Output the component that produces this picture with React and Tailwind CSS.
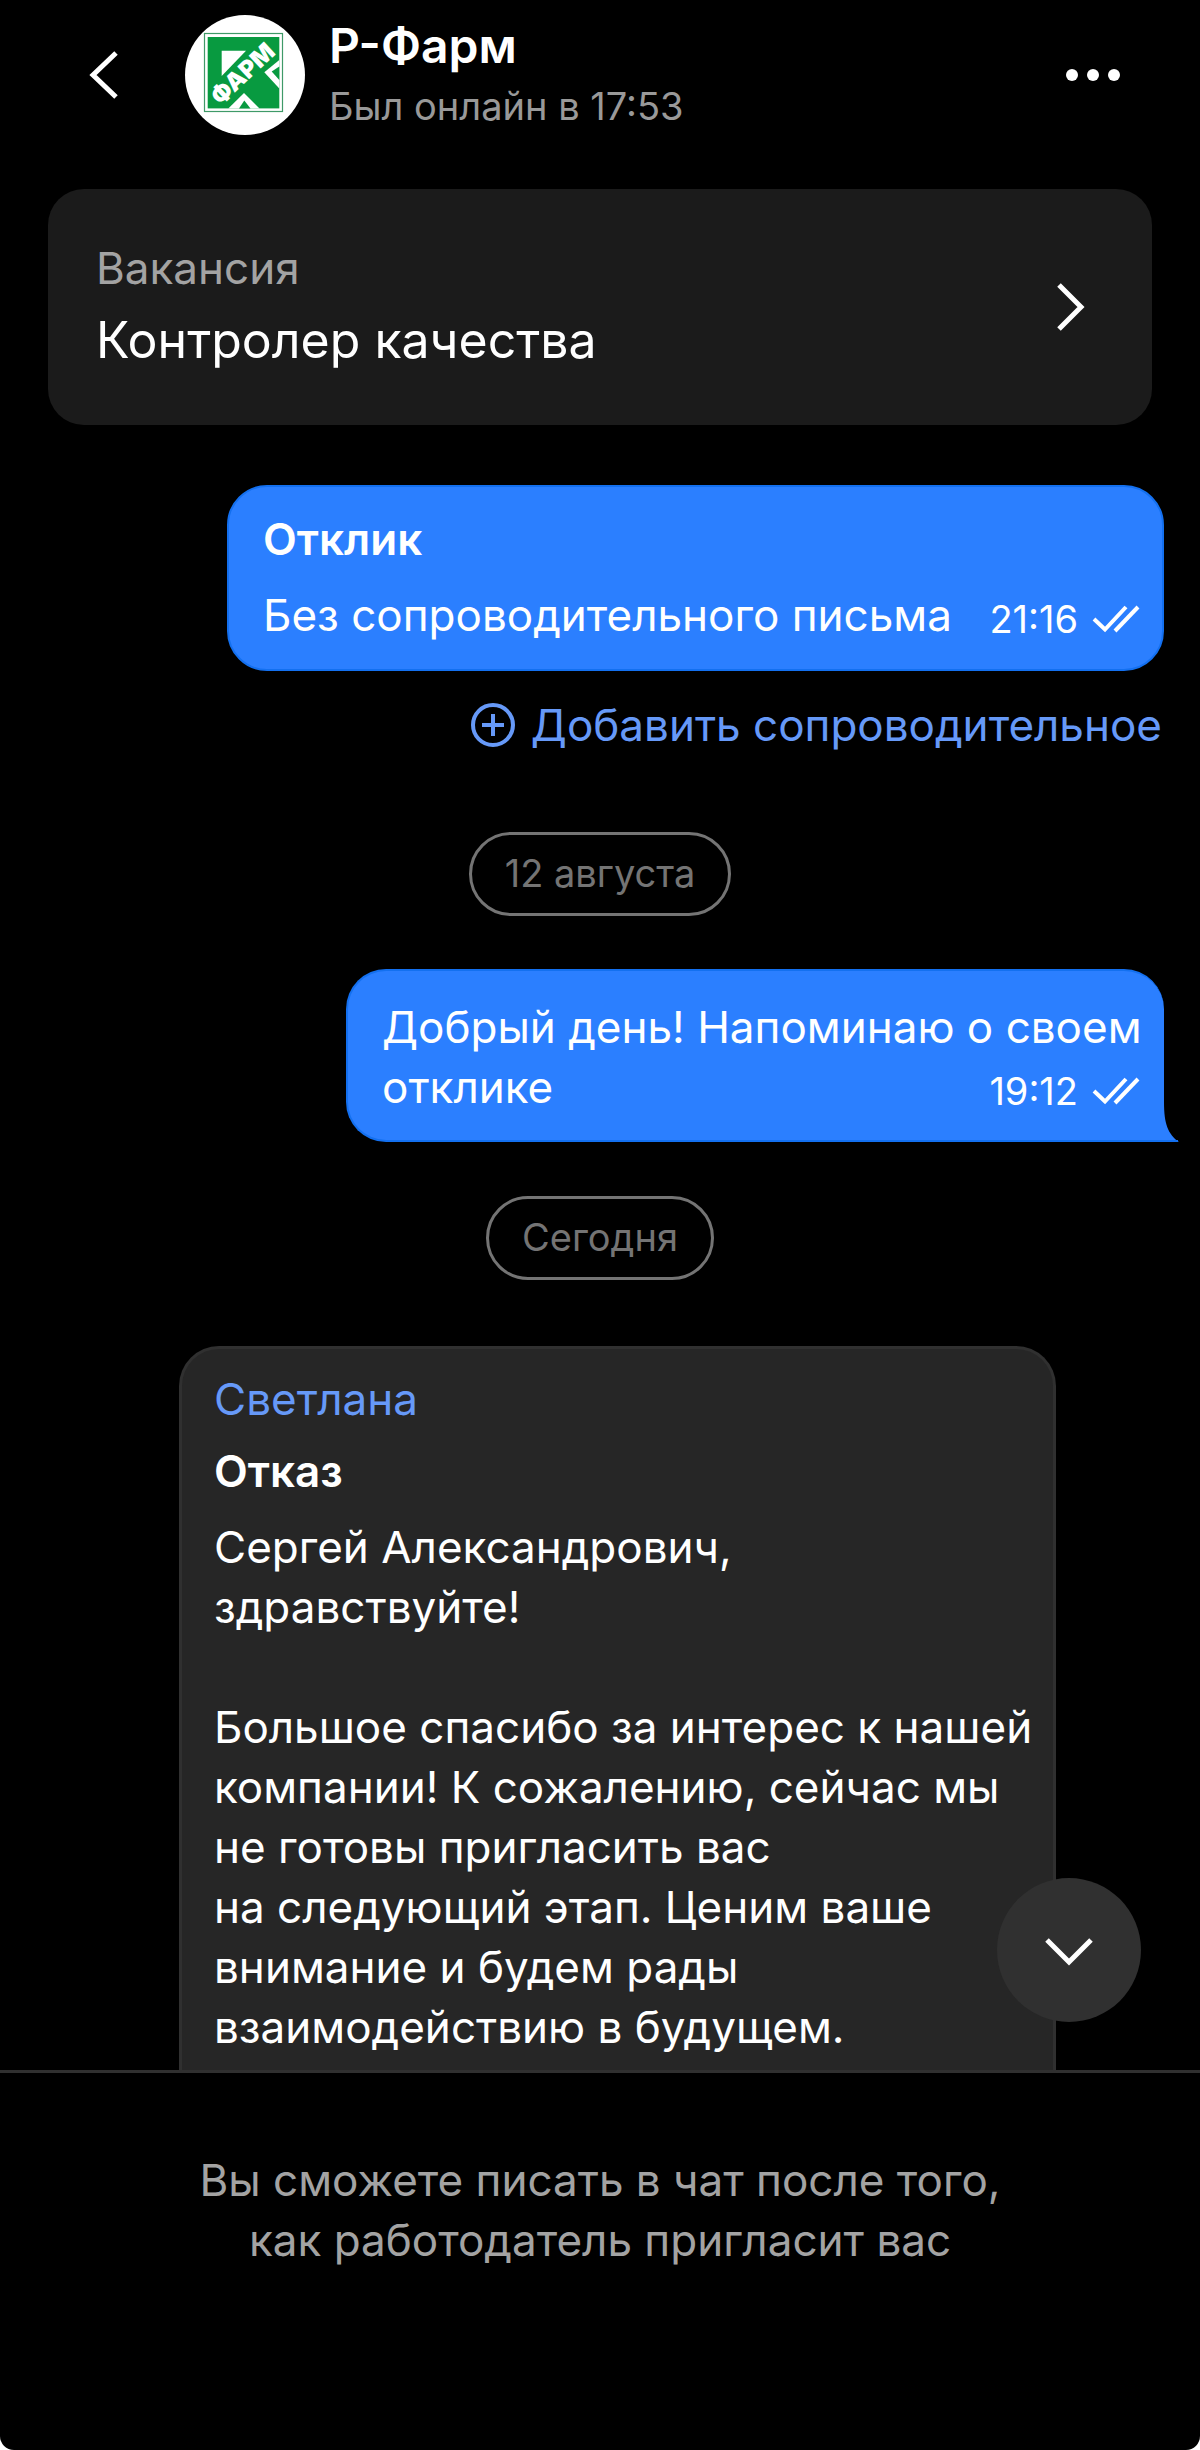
import { useState } from 'react';

const rechazo = [
  'Большое спасибо за интерес к нашей',
  'компании! К сожалению, сейчас мы',
  'не готовы пригласить вас',
  'на следующий этап. Ценим ваше',
  'внимание и будем рады',
  'взаимодействию в будущем.',
];

function Logo() {
  return (
    <svg className="w-[120px] h-[120px] shrink-0" viewBox="0 0 120 120" role="img" aria-label="Р-Фарм">
      <circle cx="60" cy="60" r="60" fill="#fff" />
      <rect x="19.5" y="18.5" width="78" height="78" fill="#fff" stroke="#3f9a68" strokeWidth="1.2" />
      <rect x="22.7" y="22" width="71.6" height="71.4" fill="#089a40" />
      <path d="M36.7 35.7H61L36.7 61z" fill="#fff" />
      <path d="M94.3 45L79.3 57.3L94.3 73.5z" fill="#fff" />
      <path d="M94.3 51.5L86.7 56.5L94.3 65z" fill="#089a40" />
      <path d="M43.3 93.4L59 78L74.5 93.4z" fill="#fff" />
      <path d="M54 93.4L59.3 85.5L65.5 93.4z" fill="#089a40" />
      <text
        x="58"
        y="67"
        textAnchor="middle"
        transform="rotate(-43 58 59)"
        fill="#fff"
        fontFamily="Inter, sans-serif"
        fontWeight="900"
        fontSize="24"
      >
        ФАРМ
      </text>
    </svg>
  );
}

function Hora({ children }) {
  return (
    <span className="flex items-center gap-[14px] pt-1 text-[38px] leading-[60px] shrink-0">
      {children}
      <svg className="w-12 h-7" viewBox="0 0 48 28" fill="none" stroke="currentColor" strokeWidth="4">
        <path d="M2 14L13 24.500L34 2" />
        <path d="M23 26L46 2" />
      </svg>
    </span>
  );
}

function Fecha({ children }) {
  return (
    <div className="self-center h-[84px] px-[33px] pb-[2px] flex items-center rounded-full border-[3px] border-[#747474] text-[#747474] text-[38px]">
      {children}
    </div>
  );
}

export default function App() {
  const [abajo, setAbajo] = useState(false);

  return (
    <div className="bg-white">
      <div className="min-h-screen flex flex-col bg-black text-white rounded-b-[14px] font-['Inter',sans-serif] text-[44px] leading-[60px]">
        <header className="flex items-center h-[150px] px-20 mb-[39px]">
          <button type="button" aria-label="Назад" className="mr-[57px]">
            <svg className="w-12 h-12" viewBox="0 0 48 48" fill="none" stroke="currentColor" strokeWidth="5">
              <path d="M36 2L13 24L36 46" />
            </svg>
          </button>
          <Logo />
          <div className="ml-6 pt-[2px] flex-1">
            <h1 className="text-[48px] leading-[60px] font-semibold">Р-Фарм</h1>
            <p className="text-[38px] leading-[60px] text-[#999999]">Был онлайн в 17:53</p>
          </div>
          <button type="button" aria-label="Меню">
            <svg className="w-[56px] h-12" viewBox="0 0 56 48" fill="currentColor">
              <circle cx="8" cy="24" r="6" />
              <circle cx="29" cy="24" r="6" />
              <circle cx="50" cy="24" r="6" />
            </svg>
          </button>
        </header>

        <a href="#vacancy" className="mx-12 h-[236px] px-12 rounded-[36px] bg-[#1b1b1b] flex items-center justify-between">
          <span className="flex flex-col pt-[6px]">
            <span className="text-[#a3a3a3]">Вакансия</span>
            <span className="text-[50px] leading-[84px]">Контролер качества</span>
          </span>
          <svg className="w-12 h-12" viewBox="0 0 48 48" fill="none" stroke="currentColor" strokeWidth="5">
            <path d="M3 2L25 24L3 46" />
          </svg>
        </a>

        <main className="flex-1 flex flex-col pt-[60px] pl-[179px] pr-9">
          <section className="self-end w-[937px] h-[186px] pl-[34px] pr-[22px] pt-5 rounded-[40px] border-2 border-[#1370f0] bg-[#2b7fff]">
            <h2 className="font-semibold leading-[64px]">Отклик</h2>
            <div className="flex justify-between items-start pt-[14px] whitespace-nowrap">
              <p>Без сопроводительного письма</p>
              <Hora>21:16</Hora>
            </div>
          </section>

          <button type="button" className="self-end flex items-center gap-4 mt-6 pr-[2px] text-[#6699f8]">
            <svg className="w-11 h-11" viewBox="0 0 44 44" fill="none" stroke="currentColor" strokeWidth="4">
              <circle cx="22" cy="22" r="20" />
              <path d="M22 11V33M11 22H33" />
            </svg>
            Добавить сопроводительное
          </button>

          <div className="-ml-[143px] mt-[77px] flex flex-col">
            <Fecha>12 августа</Fecha>
          </div>

          <section className="relative self-end w-[818px] h-[173px] mt-[53px] pl-[34px] pr-6 pt-[26px] rounded-[40px] rounded-br-none border-2 border-r-0 border-[#1370f0] bg-[#2b7fff]">
            <p className="whitespace-nowrap">Добрый день! Напоминаю о своем</p>
            <div className="flex justify-between items-start">
              <p>отклике</p>
              <Hora>19:12</Hora>
            </div>
            <svg className="absolute left-full -bottom-[2px] w-[15px] h-10" viewBox="0 0 15 40">
              <path d="M0 0C0 22 4 32 15 40H0z" fill="#2b7fff" />
              <path d="M0 39H14" stroke="#1370f0" strokeWidth="2" />
            </svg>
          </section>

          <div className="-ml-[143px] mt-[54px] flex flex-col">
            <Fecha>Сегодня</Fecha>
          </div>

          <section className="relative w-[877px] flex-1 mt-[66px] px-8 pt-5 pb-[6px] rounded-t-[40px] border-[3px] border-b-0 border-[#303030] bg-[#262626]">
            <h3 className="text-[#6699f8]">Светлана</h3>
            <h2 className="font-semibold mt-3">Отказ</h2>
            <p className="mt-4">
              Сергей Александрович,
              <br />
              здравствуйте!
            </p>
            <p className="mt-[60px] whitespace-nowrap">
              {rechazo.map((linea) => (
                <span key={linea} className="block">
                  {linea}
                </span>
              ))}
            </p>
            <button
              type="button"
              aria-label="Вниз"
              aria-pressed={abajo}
              onClick={() => setAbajo(!abajo)}
              className="absolute -right-[88px] bottom-12 w-36 h-36 rounded-full bg-[#303030] flex items-center justify-center"
            >
              <svg className="w-12 h-12" viewBox="0 0 48 48" fill="none" stroke="currentColor" strokeWidth="5">
                <path d="M2 14L24 36L46 14" />
              </svg>
            </button>
          </section>
        </main>

        <footer className="border-t-[3px] border-[#303030] pt-[77px] pb-[180px] text-center text-[#a3a3a3]">
          <p>
            Вы сможете писать в чат после того,
            <br />
            как работодатель пригласит вас
          </p>
        </footer>
      </div>
    </div>
  );
}
